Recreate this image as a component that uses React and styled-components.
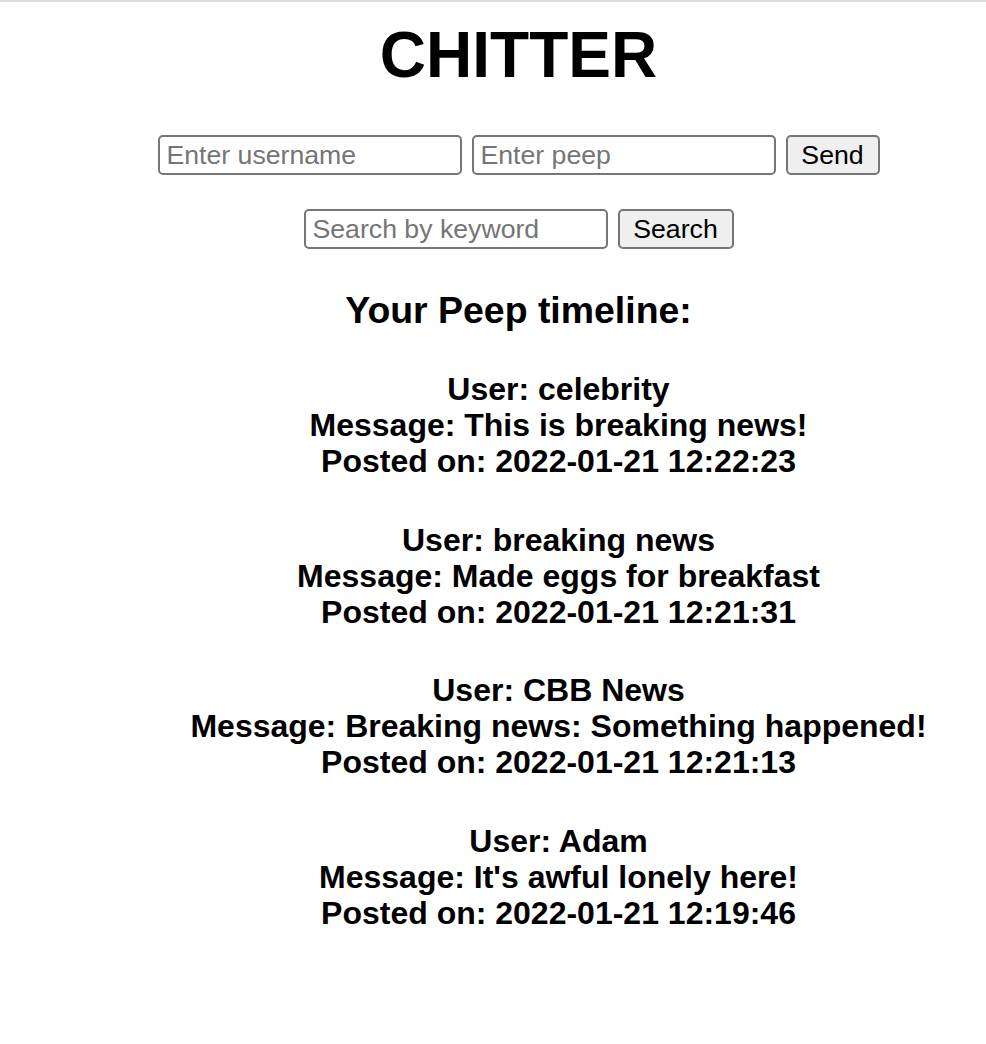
import React, { useState } from 'react'
import styled, { createGlobalStyle } from 'styled-components'

const GlobalStyle = createGlobalStyle`
  html, body {
    margin: 0;
    background: #fff;
  }
  body {
    font-family: "Liberation Sans", Arial, Helvetica, sans-serif;
    color: #000;
  }
`

const Page = styled.div`
  box-sizing: border-box;
  width: 100%;
  padding: 0 0 60px 51px;
  border-top: 2px solid #dcdcdc;
  text-align: center;
`

const Title = styled.h1`
  font-size: 64px;
  font-weight: bold;
  margin: 16px 0 0;
  line-height: normal;
`

const Row = styled.form`
  display: flex;
  justify-content: center;
  gap: 10px;
  margin-top: ${p => p.$top}px;
`

const Input = styled.input`
  box-sizing: border-box;
  width: 304px;
  height: 40px;
  padding: 0 7px;
  font-family: "Liberation Sans", Arial, sans-serif;
  font-size: 26.67px;
  border: 2px solid #767676;
  border-radius: 5px;
  outline: none;
  color: #000;

  &::placeholder {
    color: #757575;
  }
`

const Button = styled.button`
  box-sizing: border-box;
  height: 40px;
  width: ${p => p.$w}px;
  padding: 0;
  font-family: "Liberation Sans", Arial, sans-serif;
  font-size: 26.67px;
  color: #000;
  background: #efefef;
  border: 2px solid #767676;
  border-radius: 5px;
  cursor: pointer;
`

const Heading = styled.h3`
  font-size: 37.44px;
  font-weight: bold;
  margin: 40px 0 0;
  line-height: normal;
`

const Timeline = styled.ul`
  list-style: none;
  margin: 39px 0 0;
  padding: 0 0 0 80px;
  display: flex;
  flex-direction: column;
  gap: 42.5px;
`

const Peep = styled.li`
  font-size: 32px;
  font-weight: bold;
  line-height: 36px;
`

const peeps = [
  { user: 'celebrity', message: 'This is breaking news!', posted: '2022-01-21 12:22:23' },
  { user: 'breaking news', message: 'Made eggs for breakfast', posted: '2022-01-21 12:21:31' },
  { user: 'CBB News', message: 'Breaking news: Something happened!', posted: '2022-01-21 12:21:13' },
  { user: 'Adam', message: "It's awful lonely here!", posted: '2022-01-21 12:19:46' },
]

const App = () => {
  const [username, setUsername] = useState('')
  const [peep, setPeep] = useState('')
  const [keyword, setKeyword] = useState('')

  return (
    <>
      <GlobalStyle />
      <Page>
        <Title>CHITTER</Title>
        <Row $top={43} onSubmit={e => e.preventDefault()}>
          <Input placeholder="Enter username" value={username} onChange={e => setUsername(e.target.value)} />
          <Input placeholder="Enter peep" value={peep} onChange={e => setPeep(e.target.value)} />
          <Button $w={94} type="submit">Send</Button>
        </Row>
        <Row $top={34} onSubmit={e => e.preventDefault()}>
          <Input placeholder="Search by keyword" value={keyword} onChange={e => setKeyword(e.target.value)} />
          <Button $w={116} type="submit">Search</Button>
        </Row>
        <Heading>Your Peep timeline:</Heading>
        <Timeline>
          {peeps.map(p => (
            <Peep key={p.posted}>
              <div>User: {p.user}</div>
              <div>Message: {p.message}</div>
              <div>Posted on: {p.posted}</div>
            </Peep>
          ))}
        </Timeline>
      </Page>
    </>
  )
}

export default App
